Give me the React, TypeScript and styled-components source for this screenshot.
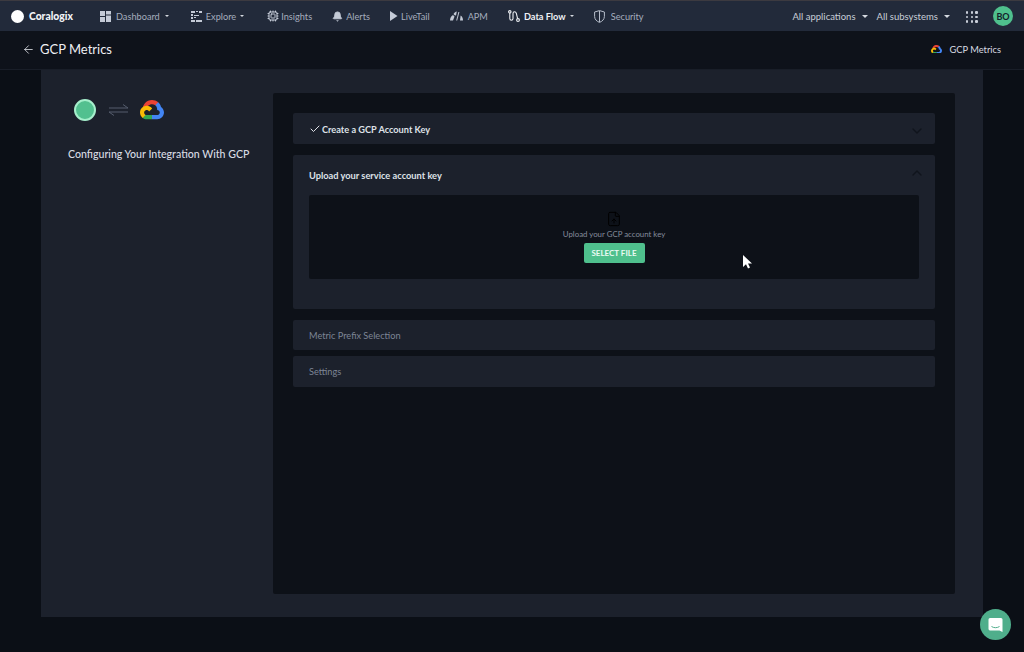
import React from "react";
import styled, { createGlobalStyle } from "styled-components";
import { ArrowLeft, Check, ChevronDown, ChevronUp, Cpu, FileUp, Bell } from "lucide-react";

const Global = createGlobalStyle`
  html, body { margin: 0; padding: 0; background: #0b0f16; }
  body { font-family: "Lato", "Open Sans", sans-serif; }
  * { box-sizing: border-box; }
`;

const Page = styled.div`
  width: 1024px; height: 652px; overflow: hidden; position: relative;
  display: flex; flex-direction: column; background: #0b0f16;
`;
const TopBar = styled.header`
  height: 31px; flex: none; display: flex; align-items: center;
  background: #222a3a; border-top: 1px solid #3c3a40; padding: 0 11px;
`;
const Brand = styled.div`
  display: flex; align-items: center; gap: 5px; width: 89px;
  color: #f2f4f7; font-size: 10.3px; font-weight: 900;
`;
const BrandDot = styled.span`
  width: 13px; height: 13px; border-radius: 50%; background: #fff; flex: none;
`;
const Nav = styled.nav`display: flex; align-items: center; gap: 20px;`;
const NavItem = styled.div<{ $active?: boolean; $gap?: number }>`
  display: flex; align-items: center; gap: ${p => p.$gap ?? 4}px;
  color: ${p => (p.$active ? "#eef0f4" : "#a5adbd")};
  font-size: 9.2px; font-weight: ${p => (p.$active ? 700 : 400)};
  svg { flex: none; }
`;
const NavCaret = styled.span<{ $after?: number }>`
  width: 0; height: 0; margin-right: ${p => p.$after ?? 3}px;
  border-left: 2px solid transparent; border-right: 2px solid transparent;
  border-top: 2px solid #d5d9e0;
`;
const SelectCaret = styled.span`
  width: 0; height: 0; margin-left: 6px;
  border-left: 3px solid transparent; border-right: 3px solid transparent;
  border-top: 3px solid #d5d9e0;
`;
const RightTools = styled.div`
  margin-left: auto; display: flex; align-items: center;
`;
const Selector = styled.div`
  display: flex; align-items: center; margin-right: 9px;
  color: #c9ced8; font-size: 9.5px;
`;
const Dots = styled.div`
  display: grid; grid-template-columns: repeat(3, 2.6px); gap: 2.2px; margin: 2px 15px 0 7px;
`;
const Dot = styled.span`width: 2.6px; height: 2.6px; background: #c9ced8; border-radius: 1px;`;
const Avatar = styled.div`
  width: 20px; height: 20px; border-radius: 50%; background: #4fc08d; color: #14202a;
  display: flex; align-items: center; justify-content: center; font-size: 9px; font-weight: 700;
`;
const SubHeader = styled.div`
  height: 39px; flex: none; display: flex; align-items: center; justify-content: space-between;
  padding: 0 23px 2px 22px; background: #0e121a; border-bottom: 1px solid #191e28;
`;
const BackTitle = styled.div`
  display: flex; align-items: center; gap: 5px; color: #eef0f4; font-size: 13px;
`;
const Crumb = styled.div`
  display: flex; align-items: center; gap: 8px; color: #d9dce2; font-size: 9.3px;
`;
const Main = styled.main`
  flex: none; margin: 0 41px; height: 547px; background: #1c212c;
  display: flex; padding: 23px 28px 23px 27px;
`;
const Side = styled.aside`width: 205px; flex: none; display: flex; flex-direction: column;`;
const Steps = styled.div`display: flex; align-items: center; margin: 6px 0 0 6px; height: 22px;`;
const StatusDot = styled.span`
  width: 22px; height: 22px; border-radius: 50%; background: #52c08f; border: 2px solid #a6efcc;
`;
const SideTitle = styled.div`
  margin-top: 26px; color: #d9dce4; font-size: 10.6px; line-height: 14px; white-space: nowrap;
  font-weight: 500;
`;
const Content = styled.section`
  flex: 1; background: #0d1118; padding: 20px; display: flex; flex-direction: column;
  border-radius: 2px;
`;
const Row = styled.div<{ $h: number; $mt: number; $muted?: boolean }>`
  height: ${p => p.$h}px; margin-top: ${p => p.$mt}px; flex: none; background: #1c212c;
  border-radius: 2px; padding: ${p => (p.$muted ? 0 : 1)}px 16px 0;
  display: flex; align-items: center; justify-content: space-between;
  color: ${p => (p.$muted ? "#7d8595" : "#dfe2e8")}; font-size: 9.2px;
  font-weight: ${p => (p.$muted ? 400 : 700)};
`;
const RowLabel = styled.span`display: flex; align-items: center; gap: 1px;`;
const Open = styled.div`
  height: 154px; margin-top: 11px; flex: none; background: #1c212c; border-radius: 2px;
  padding: 0 16px; display: flex; flex-direction: column;
`;
const OpenHead = styled.div`
  height: 40px; flex: none; display: flex; align-items: center; justify-content: space-between;
  color: #dfe2e8; font-size: 9.25px; font-weight: 700;
`;
const Down = styled(ChevronDown)`margin: 4px -6px 0 0; color: #10141c;`;
const Up = styled(ChevronUp)`margin: 0 -6px 4px 0; color: #10141c;`;
const Drop = styled.div`
  height: 84px; flex: none; background: #0d1118; border-radius: 2px;
  display: flex; flex-direction: column; align-items: center; padding-top: 16px;
`;
const DropText = styled.div`color: #858c9c; font-size: 7.85px; line-height: 11px; margin-top: 2px;`;
const SelectBtn = styled.button`
  margin-top: 3px; width: 61px; height: 20px; border: none; border-radius: 2px;
  background: #4fc08d; color: #eafaf3; font: 700 8px "Lato", sans-serif; padding: 0;
`;
const Cursor = styled.svg`position: absolute; left: 742px; top: 254px;`;
const Chat = styled.div`
  position: absolute; left: 980px; top: 609px; width: 31px; height: 31px; border-radius: 50%;
  background: #4fae8b; display: flex; align-items: center; justify-content: center;
`;

const GCloud = ({ size }: { size: number }) => (
  <svg width={size} height={size * 206 / 256} viewBox="0 0 256 206">
    <path fill="#EA4335" d="M170.25 56.82l22.25-22.25 1.49-9.37C153.44-11.68 88.98-7.5 52.42 33.92 42.27 45.42 34.73 59.76 30.72 74.57l7.97-1.12 44.5-7.34 3.44-3.51c19.8-21.74 53.27-24.67 76.13-6.17l7.49.39z" />
    <path fill="#4285F4" d="M224.2 73.92c-5.11-18.84-15.61-35.77-30.22-48.72l-31.23 31.23c13.19 10.78 20.7 27.01 20.38 44.04v5.54c15.35 0 27.8 12.45 27.8 27.8 0 15.35-12.45 27.49-27.8 27.49h-55.67l-5.47 5.93v33.34l5.47 5.23h55.67c39.93.31 72.55-31.49 72.86-71.42.19-24.2-11.74-46.89-31.79-60.46" />
    <path fill="#34A853" d="M71.87 205.8h55.59v-44.51H71.87c-3.96 0-7.8-.85-11.4-2.5l-7.89 2.42-22.41 22.25-1.95 7.57c12.57 9.49 27.9 14.83 43.65 14.77" />
    <path fill="#FBBC05" d="M71.87 61.43C31.94 61.66-.24 94.23 0 134.16c.13 22.3 10.55 43.29 28.22 56.88l32.25-32.25c-13.99-6.32-20.21-22.79-13.89-36.78 6.32-13.99 22.79-20.2 36.78-13.88 6.16 2.78 11.1 7.72 13.89 13.88l32.25-32.25C115.77 71.83 94.45 61.34 71.87 61.43" />
  </svg>
);

const DashIcon = () => (
  <svg width="11" height="11" viewBox="0 0 11 11" fill="#c4cad6">
    <rect width="5" height="5" /><rect x="6" width="5" height="3.5" /><rect y="6" width="5" height="5" /><rect x="6" y="4.5" width="5" height="6.5" />
  </svg>
);
const ExploreIcon = () => (
  <svg width="11" height="11" viewBox="0 0 11 11" fill="#c4cad6">
    <rect width="4" height="2" /><rect x="5" width="2" height="1" /><rect x="8" width="3" height="2" />
    <rect y="3" width="2" height="2" /><rect x="3" y="4" width="5" height="1" />
    <rect y="6" width="2" height="2" /><rect x="3" y="6" width="2" height="1" />
    <rect y="9" width="4" height="2" /><rect x="5" y="9" width="6" height="2" />
  </svg>
);
const PlayIcon = () => (
  <svg width="8" height="10" viewBox="0 0 8 10" fill="#c4cad6"><path d="M0 0l7.5 5L0 10z" /></svg>
);
const ApmIcon = () => (
  <svg width="13" height="10" viewBox="0 0 13 10" fill="#c4cad6">
    <path d="M0 9.5C0 7 1 5 3 4l1.5 1.5L3 9.5z" /><path d="M3.5 3C4.5 1.5 5.5.8 6.8.5L6 4.5 4.6 4.2z" />
    <path d="M6.2 9.5L8.4 1h1L7.2 9.5z" /><path d="M10 9.5l.6-5c1.5.8 2.4 2.6 2.4 5z" />
  </svg>
);
const FlowIcon = () => (
  <svg width="12" height="12" viewBox="0 0 12 12" fill="none" stroke="#eef0f4" strokeWidth="1.1">
    <circle cx="1.8" cy="1.8" r="1.2" /><circle cx="10" cy="10" r="1.4" />
    <path d="M1.8 3v5.5c0 1 .7 1.7 1.6 1.7S5 9.5 5 8.5v-5c0-1 .7-1.8 1.6-1.8S8 2.4 8.3 3.2L9.6 8.6" />
  </svg>
);
const SecurityIcon = () => (
  <svg width="11" height="13" viewBox="0 0 11 13" fill="none" stroke="#b6bdca" strokeWidth="1">
    <path d="M5.5.6L10.4 2v4.4c0 3-2.2 5-4.9 6C2.8 11.4.6 9.4.6 6.4V2z" /><path d="M5.5 1v11" />
  </svg>
);

export default function App() {
  return (
    <Page>
      <Global />
      <TopBar>
        <Brand><BrandDot />Coralogix</Brand>
        <Nav>
          <NavItem $gap={5}><DashIcon />Dashboard<NavCaret $after={2} /></NavItem>
          <NavItem><ExploreIcon />Explore<NavCaret /></NavItem>
          <NavItem $gap={2}><Cpu size={12} color="#c4cad6" />Insights</NavItem>
          <NavItem $gap={3}><Bell size={11} color="#c4cad6" fill="#c4cad6" />Alerts</NavItem>
          <NavItem $gap={3}><PlayIcon />LiveTail</NavItem>
          <NavItem $gap={5}><ApmIcon />APM</NavItem>
          <NavItem $active><FlowIcon />Data Flow<NavCaret $after={0} /></NavItem>
          <NavItem $gap={6}><SecurityIcon />Security</NavItem>
        </Nav>
        <RightTools>
          <Selector>All applications<SelectCaret /></Selector>
          <Selector>All subsystems<SelectCaret /></Selector>
          <Dots>{Array.from({ length: 9 }, (_, i) => <Dot key={i} />)}</Dots>
          <Avatar>BO</Avatar>
        </RightTools>
      </TopBar>
      <SubHeader>
        <BackTitle><ArrowLeft size={13} color="#dfe2e8" strokeWidth={1.5} />GCP Metrics</BackTitle>
        <Crumb><GCloud size={11} />GCP Metrics</Crumb>
      </SubHeader>
      <Main>
        <Side>
          <Steps>
            <StatusDot />
            <svg width="44" height="14" viewBox="0 0 44 14" fill="none" stroke="#545c6c" strokeWidth="1">
              <path d="M13 5h19M27 1.5L32 5M13 9h19M13 9l5 3.5" />
            </svg>
            <GCloud size={24} />
          </Steps>
          <SideTitle>Configuring Your Integration With GCP</SideTitle>
        </Side>
        <Content>
          <Row $h={31} $mt={0}>
            <RowLabel><Check size={12} color="#dfe2e8" />Create a GCP Account Key</RowLabel>
            <Down size={16} />
          </Row>
          <Open>
            <OpenHead>Upload your service account key<Up size={16} /></OpenHead>
            <Drop>
              <FileUp size={16} color="#000" strokeWidth={1.5} />
              <DropText>Upload your GCP account key</DropText>
              <SelectBtn>SELECT FILE</SelectBtn>
            </Drop>
          </Open>
          <Row $h={30} $mt={11} $muted>Metric Prefix Selection</Row>
          <Row $h={31} $mt={6} $muted>Settings</Row>
        </Content>
      </Main>
      <Cursor width="11" height="16" viewBox="0 0 11 16">
        <path d="M1 1v12l3-2.8 2 4.3 2-.9-2-4.2h4z" fill="#fff" />
      </Cursor>
      <Chat>
        <svg width="15" height="16" viewBox="0 0 15 16">
          <path d="M2 1h11a1.5 1.5 0 0 1 1.5 1.5V15l-3-1.6H2A1.5 1.5 0 0 1 .5 12V2.5A1.5 1.5 0 0 1 2 1z" fill="#fff" />
          <path d="M3.5 9.5c2.4 1.6 5.6 1.6 8 0" stroke="#4fae8b" strokeWidth="1" fill="none" />
        </svg>
      </Chat>
    </Page>
  );
}
